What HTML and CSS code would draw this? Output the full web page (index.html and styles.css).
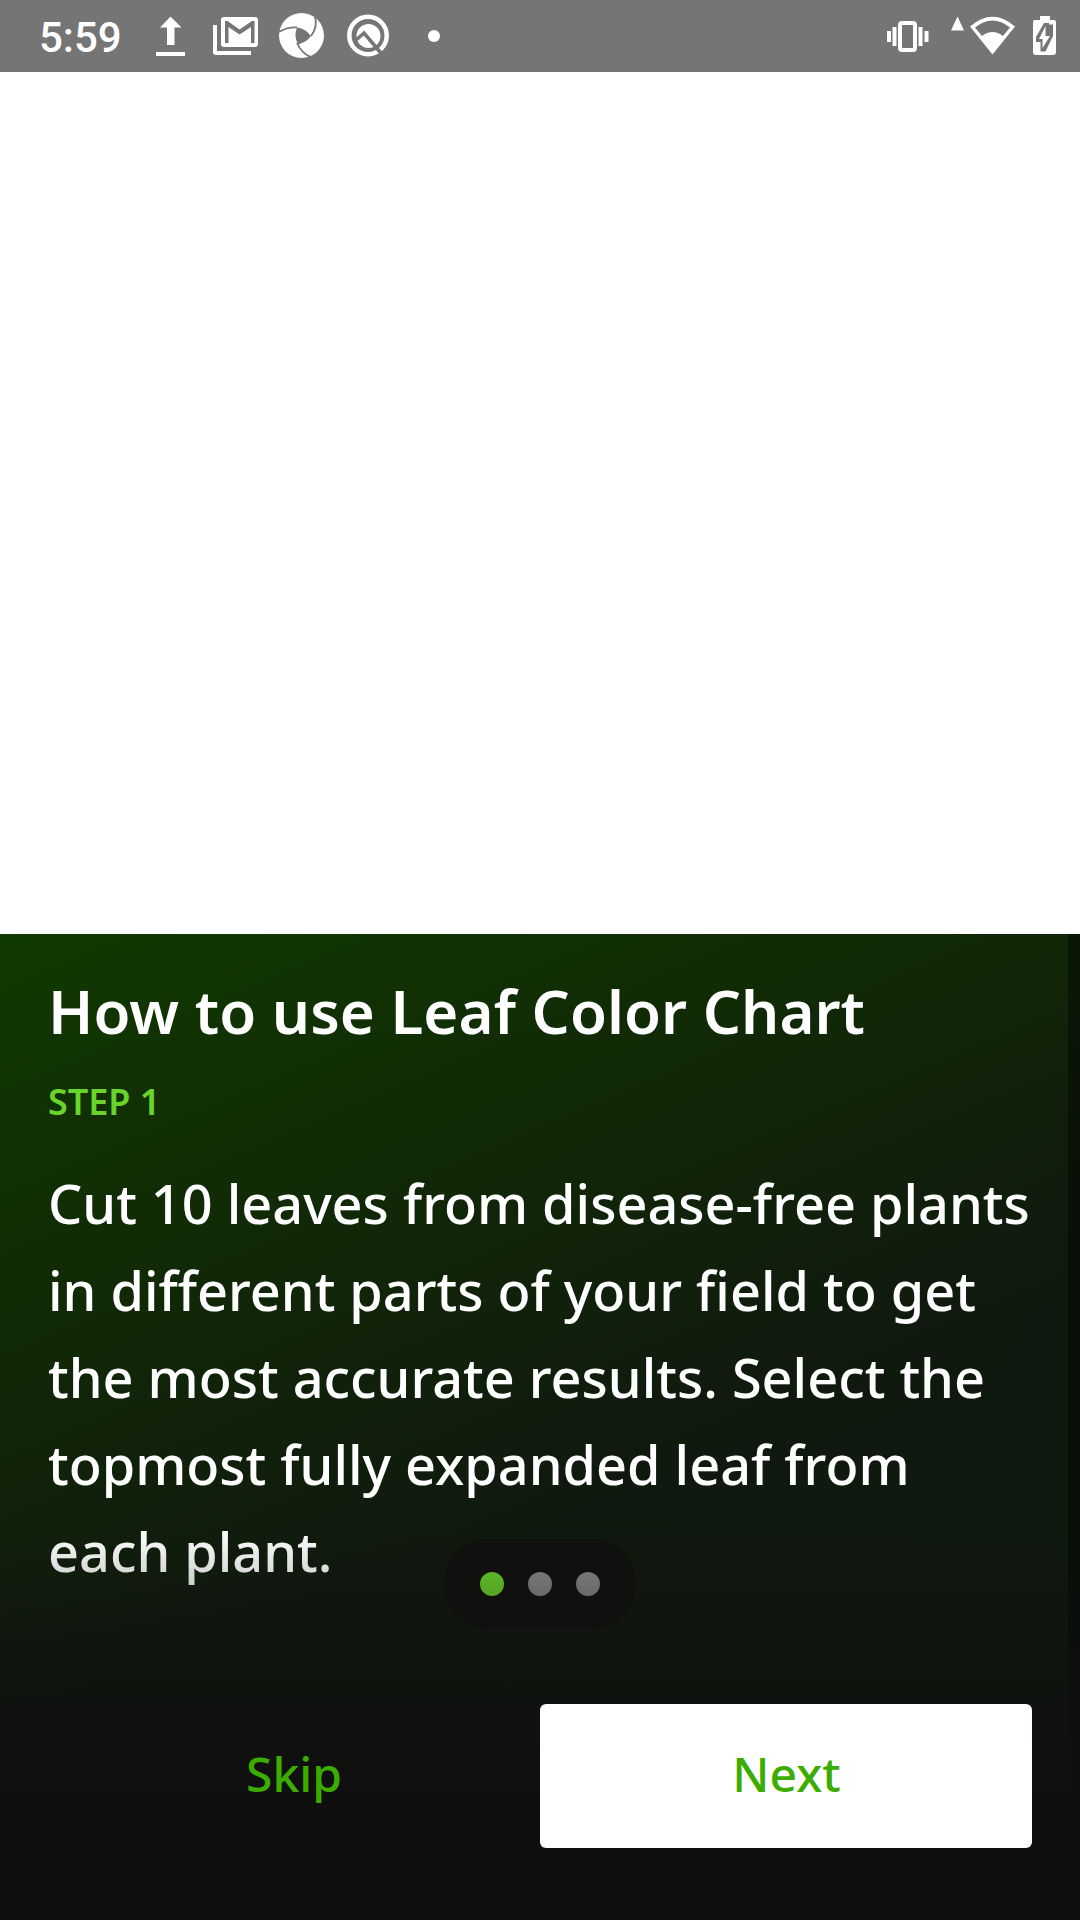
FILE: index.html
```html
<!DOCTYPE html>
<html lang="en">
<head>
<meta charset="utf-8">
<title>Leaf Color Chart</title>
<link rel="stylesheet" href="styles.css">
</head>
<body>
<div class="screen">
  <header class="status">
    <span class="clock">5:59</span>
    <svg class="tray" width="300" height="72" viewBox="140 0 300 72" fill="#fff">
      <path d="M170.500 16.500L181.500 27.500H174.500V45H167V27.500H160zM156 52h29v4h-29z"/>
      <path d="M213 25h4v26h34v4h-35q-3 0-3-3z"/>
      <path fill-rule="evenodd" d="M224 17h31q3 0 3 3v24q0 3-3 3h-31q-3 0-3-3V20q0-3 3-3zM225 21v22h3.500V27L239.500 34.500 251 27V43h3.500V21h-2.500L239.500 29.500 227.500 21z"/>
      <circle cx="301.500" cy="35.500" r="22.500"/>
      <path class="cut" d="M297 27.500Q305 28 311 36Q307 42 298 44.500Q293.500 36 297 27.500z"/>
      <g class="blades"><path d="M279 32Q287 27 297 27.500"/><path d="M315 16Q318 27 311 36"/><path d="M311 57Q302 54 297 43"/></g>
      <circle cx="368" cy="35.500" r="18.700" fill="none" stroke="#fff" stroke-width="4.500"/>
      <circle cx="368.500" cy="36" r="12"/>
      <path class="q-mark" d="M355 41L364 33 383 55.500"/>
      <circle cx="434" cy="36" r="6"/>
    </svg>
    <svg class="signals" width="180" height="72" viewBox="880 0 180 72" fill="#fff">
      <path d="M887 31h4v11h-4zM892.500 27h4v19h-4zM918.500 27h4v19h-4zM924.500 31h4v11h-4z"/>
      <rect x="900" y="23" width="15" height="27" rx="2" fill="none" stroke="#fff" stroke-width="4"/>
      <path d="M957.500 16.500L964 30.500H951z"/>
      <path fill-rule="evenodd" d="M970 26.500Q992.500 7 1015 26.500L992.500 54.500zM975 27.500L982 36Q992.500 28 1003 36L1010 27.500Q992.500 13.500 975 27.500z"/>
      <path d="M1040 16h10v4h4q2 0 2 2v30q0 3-3 3h-17q-3 0-3-3V22q0-2 2-2h5z"/>
      <path class="cut" d="M1044 23H1049V24.500H1053V36L1045.500 51.500H1040.500V42H1036V37z"/>
      <path d="M1045.500 26V36H1050L1042.500 48V39H1039z"/>
    </svg>
  </header>
  <div class="picture"></div>
  <main class="panel">
    <h1 class="title">How to use Leaf Color Chart</h1>
    <p class="step">STEP 1</p>
    <p class="copy">Cut 10 leaves from disease-free plants in different parts of your field to get the most accurate results. Select the topmost fully expanded leaf from each plant.</p>
    <div class="scrollbar"></div>
    <div class="pager"><i class="dot active"></i><i class="dot"></i><i class="dot"></i></div>
    <div class="fade"></div>
    <div class="actions"><button class="button skip">Skip</button><button class="button next">Next</button></div>
  </main>
</div>
</body>
</html>
```
FILE: styles.css
```css
* { box-sizing: border-box; margin: 0; }
body { font-family: "Noto Sans", sans-serif; background: #fff; }
.screen { width: 1080px; height: 1920px; display: flex; flex-direction: column; overflow: hidden; }
.status { height: 72px; flex: none; display: flex; align-items: center; background: #757575; padding: 0 20px 0 39px; }
.clock { width: 101px; font: 500 42px/72px Roboto, sans-serif; color: #fff; padding-top: 3px; }
.signals { margin-left: auto; }
.cut { fill: #757575; }
.blades { fill: none; stroke: #757575; stroke-width: 1.8; }
.q-mark { fill: none; stroke: #757575; stroke-width: 3.5; }
.picture { height: 862px; flex: none; background: #fff; }
.panel { position: relative; flex: 1; display: flex; flex-direction: column; padding: 36px 48px 72px; color: #fff; background: linear-gradient(157deg, #113a00 0, #10190e 55%, #0f190f 100%); }
.title { font-size: 60px; font-weight: 600; line-height: 82px; letter-spacing: .04px; white-space: nowrap; }
.step { margin-top: 26px; font-size: 36px; font-weight: 600; line-height: 48px; color: #6bd42b; }
.copy { margin-top: 34px; margin-right: -12px; font-size: 54px; font-weight: 500; line-height: 87px; }
.scrollbar { position: absolute; top: 0; right: 0; bottom: 0; width: 12px; background: rgba(0, 0, 0, .4); }
.pager { position: absolute; left: 444px; top: 605px; width: 192px; height: 90px; border-radius: 45px; background: #10100f; display: flex; align-items: center; justify-content: center; gap: 24px; }
.dot { width: 24px; height: 24px; border-radius: 50%; background: #888; }
.dot.active { background: #6bd42b; }
.fade { position: absolute; left: 0; right: 0; top: 596px; bottom: 0; background: linear-gradient(rgba(15, 15, 15, 0), #0f0f0f 270px); }
.actions { position: relative; margin-top: auto; display: grid; grid-template-columns: 1fr 1fr; }
.button { height: 144px; border: 0; border-radius: 6px; background: none; color: #3cad00; font: 500 48px/66px "Noto Sans", sans-serif; padding: 0 0 4px; }
.next { background: #fff; padding-left: 1px; }
```
